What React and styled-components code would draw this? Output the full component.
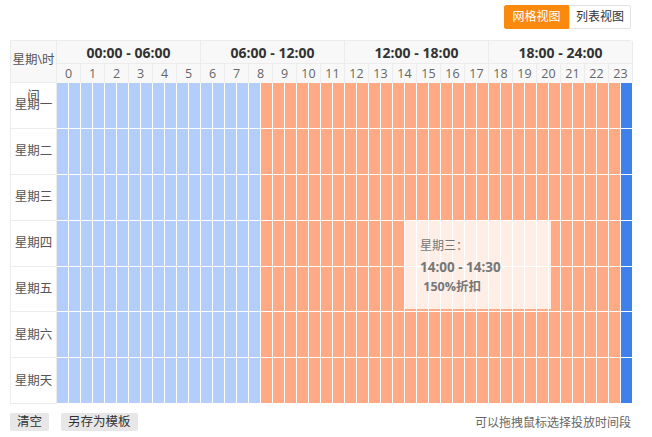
import React from 'react';
import styled, { createGlobalStyle } from 'styled-components';

const GlobalStyle = createGlobalStyle`
  * {
    box-sizing: border-box;
  }
  body {
    margin: 0;
    background: #fff;
    font-family: 'Open Sans', 'Noto Sans CJK SC', sans-serif;
    font-size: 12px;
    color: #333;
  }
`;

const Page = styled.div`
  width: 652px;
  padding: 5px 21px 0 10px;
`;

const TopBar = styled.div`
  display: flex;
  justify-content: flex-end;
  height: 35px;
`;

const ViewButton = styled.button`
  height: 24px;
  width: ${(props) => (props.active ? '65px' : '62px')};
  padding: 0;
  border: 1px solid ${(props) => (props.active ? '#f98a0e' : '#e2e2e2')};
  border-radius: ${(props) => (props.active ? '2px 0 0 2px' : '0 2px 2px 0')};
  background: ${(props) => (props.active ? '#f98a0e' : '#fff')};
  color: ${(props) => (props.active ? '#fff' : '#333')};
  font-family: inherit;
  font-size: 12px;
  line-height: 22px;
  cursor: pointer;
`;

const Schedule = styled.div`
  position: relative;
`;

const Grid = styled.div`
  display: grid;
  grid-template-columns: 46px repeat(48, 12px);
  grid-template-rows: 23px 19px repeat(7, 45.9px);
  border-top: 1px solid #ececec;
  border-left: 1px solid #ececec;
`;

const Corner = styled.div`
  grid-row: 1 / 3;
  grid-column: 1;
  background: #f8f8f8;
  border-right: 1px solid #ececec;
  border-bottom: 1px solid #ececec;
  text-align: center;
  line-height: 36px;
  padding-top: 1px;
  color: #555;
  font-size: 12.5px;
  position: relative;
  z-index: 1;
  white-space: nowrap;
`;

const GroupHead = styled.div`
  grid-row: 1;
  grid-column: span 12;
  background: #f8f8f8;
  border-right: 1px solid #ececec;
  border-bottom: 1px solid #ececec;
  display: flex;
  align-items: center;
  justify-content: center;
  font-size: 14px;
  font-weight: 700;
  color: #333;
`;

const HourHead = styled.div`
  grid-row: 2;
  grid-column: span 2;
  background: #f8f8f8;
  border-right: 1px solid #ececec;
  display: flex;
  align-items: center;
  justify-content: center;
  font-size: 12.5px;
  color: #666;
`;

const DayLabel = styled.div`
  grid-column: 1;
  border-right: 1px solid #ececec;
  border-bottom: 1px solid #ececec;
  display: flex;
  align-items: center;
  justify-content: center;
  padding-bottom: 3px;
  font-size: 12.5px;
  color: #555;
`;

const SLOT_COLORS = {
  normal: '#b4cefb',
  discount: '#ffaa84',
  selected: '#3f80ea',
};

const Slot = styled.div`
  background: ${(props) => SLOT_COLORS[props.kind]};
  border-right: 1px solid #fff;
  border-bottom: 1px solid #fff;
`;

const Tooltip = styled.div`
  position: absolute;
  left: 395px;
  top: 180px;
  width: 146px;
  height: 89px;
  padding: 16px 15px;
  background: rgba(255, 255, 255, 0.8);
  color: #777;
  font-size: 12px;
  line-height: 19px;
`;

const TipStrong = styled.div`
  font-weight: 700;
  font-size: ${(props) => (props.big ? '13.5px' : '12.5px')};
  margin-top: ${(props) => (props.big ? '3px' : '0')};
`;

const Footer = styled.div`
  display: flex;
  align-items: center;
  margin-top: 9px;
  gap: 12px;
`;

const GrayButton = styled.button`
  height: 18px;
  padding: 0 7px;
  border: none;
  border-radius: 2px;
  background: #e7e7e7;
  color: #333;
  font-family: inherit;
  font-size: 12.5px;
  line-height: 18px;
`;

const Hint = styled.span`
  margin-left: auto;
  color: #666;
  font-size: 12px;
`;

const days = ['星期一', '星期二', '星期三', '星期四', '星期五', '星期六', '星期天'];
const groups = ['00:00 - 06:00', '06:00 - 12:00', '12:00 - 18:00', '18:00 - 24:00'];
const hours = Array.from({ length: 24 }, (_, i) => i);
const slots = Array.from({ length: 48 }, (_, i) => i);

// 0:00-8:30 normal price, 8:30-23:30 discount, last half hour picked
const slotKind = (i) => {
  if (i < 17) return 'normal';
  if (i < 47) return 'discount';
  return 'selected';
};

const App = () => {
  return (
    <>
      <GlobalStyle />
      <Page>
        <TopBar>
          <ViewButton active>网格视图</ViewButton>
          <ViewButton>列表视图</ViewButton>
        </TopBar>

        <Schedule>
          <Grid>
            <Corner>
              星期\时
              <br />
              间
            </Corner>
            {groups.map((g) => (
              <GroupHead key={g}>{g}</GroupHead>
            ))}
            {hours.map((h) => (
              <HourHead key={h}>{h}</HourHead>
            ))}
            {days.map((d) => (
              <React.Fragment key={d}>
                <DayLabel>{d}</DayLabel>
                {slots.map((s) => (
                  <Slot key={s} kind={slotKind(s)} />
                ))}
              </React.Fragment>
            ))}
          </Grid>

          <Tooltip>
            <div>星期三：</div>
            <TipStrong big>14:00 - 14:30</TipStrong>
            <TipStrong>&nbsp;150%折扣</TipStrong>
          </Tooltip>
        </Schedule>

        <Footer>
          <GrayButton>清空</GrayButton>
          <GrayButton>另存为模板</GrayButton>
          <Hint>可以拖拽鼠标选择投放时间段</Hint>
        </Footer>
      </Page>
    </>
  );
};

export default App;
